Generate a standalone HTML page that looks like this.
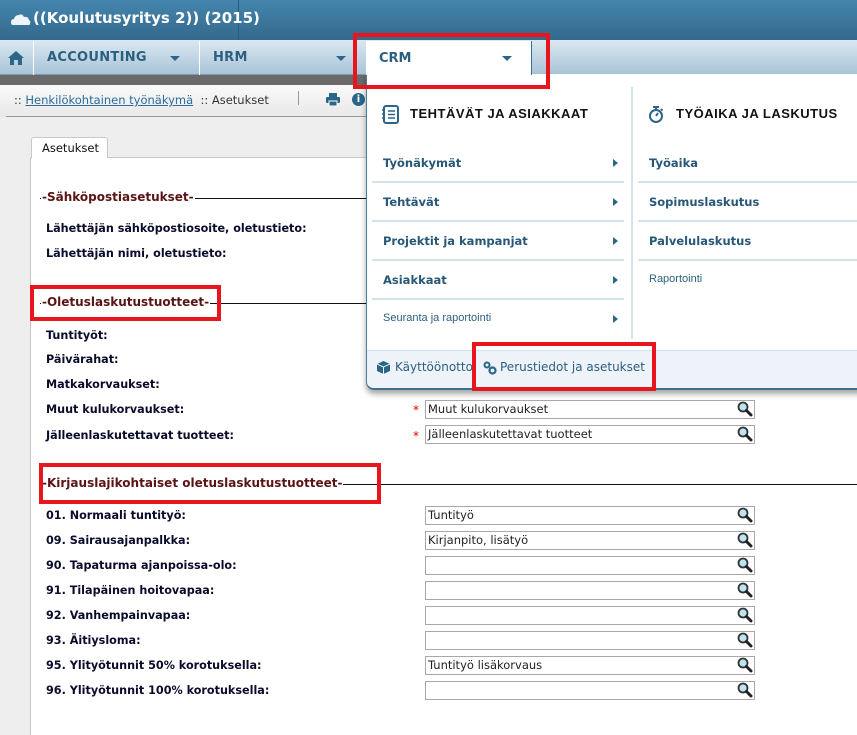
<!DOCTYPE html>
<html><head><meta charset="utf-8"><style>
*{margin:0;padding:0;box-sizing:border-box}
body{width:857px;height:735px;overflow:hidden;position:relative;background:#fff;font-family:"DejaVu Sans",Verdana,sans-serif;font-size:11px;color:#111}
.a{position:absolute;white-space:nowrap}
.top{left:0;top:0;width:857px;height:40px;background:linear-gradient(#4585ad,#33698c);}
.nav{left:0;top:40px;width:857px;height:35px;background:linear-gradient(#dbe8f1,#a9c4d8);border-bottom:1px solid #7d9bb0}
.navt{font-weight:bold;font-size:13px;color:#2b5f80;top:50px;letter-spacing:.3px}
.tri{width:0;height:0;border-left:5px solid transparent;border-right:5px solid transparent;border-top:5px solid #2b6688}
.lbl{font-weight:bold;color:#0b0b2c;left:46px;font-size:11.2px}
.hdr{font-weight:bold;font-size:12px;color:#5a1414;background:#fff;padding:0 1px}
.inp{left:425px;width:330px;height:19px;border:1px solid #a8a8a8;background:#fff;font-size:11.5px;color:#222;padding:1px 0 0 2px}
.mi{font-weight:bold;font-size:11.5px;color:#275877}
.sep{height:2px;background:#d3e3ee}
.arr{width:0;height:0;border-top:4px solid transparent;border-bottom:4px solid transparent;border-left:5px solid #2b6688}
.red{border:4px solid #e8141e}
.star{color:#d00;left:413px;font-size:12px}
</style></head><body>
<div class="a top"></div>
<div class="a" style="left:238px;top:0;width:1px;height:40px;background:#2c5c7a"></div>
<svg class="a" style="left:11px;top:12px" width="20" height="14" viewBox="0 0 20 14"><path d="M2 13 Q0 13 0 10 Q0 7 3 7 Q4 3 8 3 Q11 1 13 5 Q17 4 18 8 Q20 9 19 12 Q19 13 17 13 Z" fill="#eef3f7"/></svg>
<div class="a" style="left:33px;top:9px;color:#fff;font-weight:bold;font-size:15px">((Koulutusyritys 2)) (2015)</div>
<div class="a nav"></div>
<div class="a" style="left:33px;top:41px;width:1px;height:34px;background:#fff"></div>
<div class="a" style="left:199px;top:41px;width:1px;height:34px;background:#fff"></div>
<svg class="a" style="left:7px;top:50px" width="18" height="16" viewBox="0 0 18 16"><path d="M9 1 L1 8 H3 V15 H7 V10 H11 V15 H15 V8 H17 Z" fill="#2b6688"/></svg>
<div class="a navt" style="left:47px">ACCOUNTING</div>
<div class="a tri" style="left:170px;top:56px"></div>
<div class="a navt" style="left:213px">HRM</div>
<div class="a tri" style="left:336px;top:56px"></div>
<div class="a" style="left:0;top:75px;width:857px;height:10px;background:#6a6a6a"></div>
<div class="a" style="left:0;top:85px;width:857px;height:650px;background:#eeeeee"></div>
<div class="a" style="left:0;top:85px;width:857px;height:32px;background:linear-gradient(#fafafa,#e8e8e8)"></div>
<div class="a" style="left:6px;top:116px;width:851px;height:1px;background:#999"></div>
<div class="a" style="left:14px;top:93px;font-size:11.5px;color:#333">:: <span style="color:#2a6c9a;text-decoration:underline">Henkilökohtainen työnäkymä</span>&nbsp; :: Asetukset</div>
<div class="a" style="left:298px;top:91px;width:1px;height:14px;background:#999"></div>
<svg class="a" style="left:326px;top:93px" width="14" height="13"><rect x="3" y="0" width="8" height="4" fill="#2b6688"/><rect x="0" y="4" width="14" height="6" rx="1" fill="#2b6688"/><rect x="3" y="8" width="8" height="5" fill="#2b6688" stroke="#fff" stroke-width="1"/></svg>
<div class="a" style="left:352px;top:93px;width:13px;height:13px;border-radius:50%;background:#2b6688;color:#fff;font-weight:bold;font-size:10px;text-align:center;line-height:13px">i</div>
<div class="a" style="left:30px;top:157px;width:827px;height:578px;background:#fff;border-left:1px solid #c4c4c4"></div>
<div class="a" style="left:31px;top:137px;width:77px;height:21px;background:#fff;border:1px solid #c8c8c8;border-bottom:none;border-radius:3px 3px 0 0;padding:3px 0 0 10px;font-size:11.5px">Asetukset</div>
<div class="a" style="left:108px;top:157px;width:749px;height:1px;background:#c8c8c8"></div>

<div class="a" style="left:40px;top:198px;width:817px;height:1px;background:#111"></div>
<div class="a hdr" style="left:41px;top:190px">-Sähköpostiasetukset-</div>
<div class="a lbl" style="top:222px">Lähettäjän sähköpostiosoite, oletustieto:</div>
<div class="a lbl" style="top:247px">Lähettäjän nimi, oletustieto:</div>

<div class="a" style="left:40px;top:303px;width:817px;height:1px;background:#111"></div>
<div class="a hdr" style="left:41px;top:295px">-Oletuslaskutustuotteet-</div>
<div class="a lbl" style="top:329px">Tuntityöt:</div>
<div class="a lbl" style="top:353px">Päivärahat:</div>
<div class="a lbl" style="top:378px">Matkakorvaukset:</div>
<div class="a lbl" style="top:403px">Muut kulukorvaukset:</div>
<div class="a lbl" style="top:429px">Jälleenlaskutettavat tuotteet:</div>
<div class="a star" style="top:403px">*</div>
<div class="a star" style="top:429px">*</div>
<div class="a inp" style="top:400px">Muut kulukorvaukset</div>
<div class="a inp" style="top:425px">Jälleenlaskutettavat tuotteet</div>

<div class="a" style="left:40px;top:484px;width:817px;height:1px;background:#111"></div>
<div class="a hdr" style="left:41px;top:476px">-Kirjauslajikohtaiset oletuslaskutustuotteet-</div>
<div class="a lbl" style="top:509px">01. Normaali tuntityö:</div>
<div class="a lbl" style="top:534px">09. Sairausajanpalkka:</div>
<div class="a lbl" style="top:559px">90. Tapaturma ajanpoissa-olo:</div>
<div class="a lbl" style="top:584px">91. Tilapäinen hoitovapaa:</div>
<div class="a lbl" style="top:609px">92. Vanhempainvapaa:</div>
<div class="a lbl" style="top:634px">93. Äitiysloma:</div>
<div class="a lbl" style="top:659px">95. Ylityötunnit 50% korotuksella:</div>
<div class="a lbl" style="top:684px">96. Ylityötunnit 100% korotuksella:</div>
<div class="a inp" style="top:506px">Tuntityö</div>
<div class="a inp" style="top:531px">Kirjanpito, lisätyö</div>
<div class="a inp" style="top:556px"></div>
<div class="a inp" style="top:581px"></div>
<div class="a inp" style="top:606px"></div>
<div class="a inp" style="top:631px"></div>
<div class="a inp" style="top:656px">Tuntityö lisäkorvaus</div>
<div class="a inp" style="top:681px"></div>

<!-- dropdown -->
<div class="a" style="left:366px;top:74px;width:500px;height:316px;background:#fff;border-left:1px solid #4b7d9c;border-bottom:2px solid #3d6f8e;border-radius:0 0 0 8px;box-shadow:0 4px 6px rgba(0,0,0,.35)"></div>
<div class="a" style="left:366px;top:41px;width:166px;height:34px;background:#fff;border-right:1px solid #3d6f8e"></div>
<div class="a" style="left:379px;top:51px;font-weight:bold;font-size:13px;color:#2b5f80">CRM</div>
<div class="a tri" style="left:502px;top:56px"></div>
<div class="a" style="left:631px;top:87px;width:2px;height:252px;background:#d3e3ee"></div>
<svg class="a" style="left:382px;top:105px" width="18" height="19" viewBox="0 0 18 19"><rect x="2" y="1" width="14" height="17" rx="2" fill="none" stroke="#2b6688" stroke-width="2"/><path d="M6 6H13M6 9.5H13M6 13H13" stroke="#2b6688" stroke-width="1.6"/><path d="M0 5H3M0 9H3M0 13H3" stroke="#2b6688" stroke-width="1.5"/></svg>
<div class="a" style="left:410px;top:106px;font-size:13px;font-weight:bold;color:#111;font-family:'Liberation Sans',sans-serif;letter-spacing:.5px">TEHTÄVÄT JA ASIAKKAAT</div>
<svg class="a" style="left:648px;top:105px" width="16" height="19" viewBox="0 0 16 19"><circle cx="8" cy="11" r="6" fill="none" stroke="#2b6688" stroke-width="2"/><path d="M5 2H11M8 2V5M8 11L10 8M13 4L14.5 5.5" stroke="#2b6688" stroke-width="2"/></svg>
<div class="a" style="left:676px;top:106px;font-size:13px;font-weight:bold;color:#111;font-family:'Liberation Sans',sans-serif;letter-spacing:.5px">TYÖAIKA JA LASKUTUS</div>

<div class="a mi" style="left:383px;top:156px">Työnäkymät</div>
<div class="a arr" style="left:613px;top:159px"></div>
<div class="a sep" style="left:372px;top:181px;width:252px"></div>
<div class="a mi" style="left:383px;top:195px">Tehtävät</div>
<div class="a arr" style="left:613px;top:198px"></div>
<div class="a sep" style="left:372px;top:220px;width:252px"></div>
<div class="a mi" style="left:383px;top:234px">Projektit ja kampanjat</div>
<div class="a arr" style="left:613px;top:237px"></div>
<div class="a sep" style="left:372px;top:259px;width:252px"></div>
<div class="a mi" style="left:383px;top:273px">Asiakkaat</div>
<div class="a arr" style="left:613px;top:276px"></div>
<div class="a sep" style="left:372px;top:298px;width:252px"></div>
<div class="a" style="left:383px;top:312px;font-size:11px;color:#2b5f80;font-family:'Liberation Sans',sans-serif">Seuranta ja raportointi</div>
<div class="a arr" style="left:613px;top:315px"></div>

<div class="a mi" style="left:649px;top:156px">Työaika</div>
<div class="a sep" style="left:638px;top:181px;width:219px"></div>
<div class="a mi" style="left:649px;top:195px">Sopimuslaskutus</div>
<div class="a sep" style="left:638px;top:220px;width:219px"></div>
<div class="a mi" style="left:649px;top:234px">Palvelulaskutus</div>
<div class="a sep" style="left:638px;top:259px;width:219px"></div>
<div class="a" style="left:649px;top:273px;font-size:11px;color:#2b5f80;font-family:'Liberation Sans',sans-serif">Raportointi</div>

<div class="a" style="left:367px;top:350px;width:490px;height:38px;background:#eef3f9;border-top:1px solid #d3e3ee;border-radius:0 0 0 7px"></div>
<svg class="a" style="left:377px;top:361px" width="13" height="13" viewBox="0 0 13 13"><path d="M6.5 0L13 3V10L6.5 13L0 10V3Z" fill="#2b6688"/><path d="M0 3L6.5 6L13 3M6.5 6V13" stroke="#eef3f9" stroke-width="1" fill="none"/></svg>
<div class="a" style="left:395px;top:360px;font-size:12px;color:#2b5f80">Käyttöönotto</div>
<svg class="a" style="left:483px;top:361px" width="14" height="14" viewBox="0 0 14 14"><circle cx="4" cy="4" r="2.5" fill="none" stroke="#2b6688" stroke-width="2"/><circle cx="9.5" cy="9.5" r="3" fill="none" stroke="#2b6688" stroke-width="2.2"/></svg>
<div class="a" style="left:500px;top:360px;font-size:12px;color:#2b5f80">Perustiedot ja asetukset</div>

<!-- red boxes -->
<div class="a red" style="left:353px;top:33px;width:197px;height:56px"></div>
<div class="a red" style="left:472px;top:342px;width:184px;height:49px"></div>
<div class="a red" style="left:30px;top:285px;width:191px;height:36px"></div>
<div class="a red" style="left:39px;top:463px;width:342px;height:41px"></div>

<svg width="0" height="0" style="position:absolute"><defs><symbol id="m" viewBox="0 0 16 16"><circle cx="6" cy="6" r="4.5" fill="#bfe3ef" stroke="#333" stroke-width="1.8"/><path d="M9.5 9.5L14 14" stroke="#222" stroke-width="3" stroke-linecap="round"/></symbol></defs></svg>
<svg class="a" style="left:737px;top:401px" width="16" height="16"><use href="#m"/></svg>
<svg class="a" style="left:737px;top:426px" width="16" height="16"><use href="#m"/></svg>
<svg class="a" style="left:737px;top:507px" width="16" height="16"><use href="#m"/></svg>
<svg class="a" style="left:737px;top:532px" width="16" height="16"><use href="#m"/></svg>
<svg class="a" style="left:737px;top:557px" width="16" height="16"><use href="#m"/></svg>
<svg class="a" style="left:737px;top:582px" width="16" height="16"><use href="#m"/></svg>
<svg class="a" style="left:737px;top:607px" width="16" height="16"><use href="#m"/></svg>
<svg class="a" style="left:737px;top:632px" width="16" height="16"><use href="#m"/></svg>
<svg class="a" style="left:737px;top:657px" width="16" height="16"><use href="#m"/></svg>
<svg class="a" style="left:737px;top:682px" width="16" height="16"><use href="#m"/></svg>
</body></html>
